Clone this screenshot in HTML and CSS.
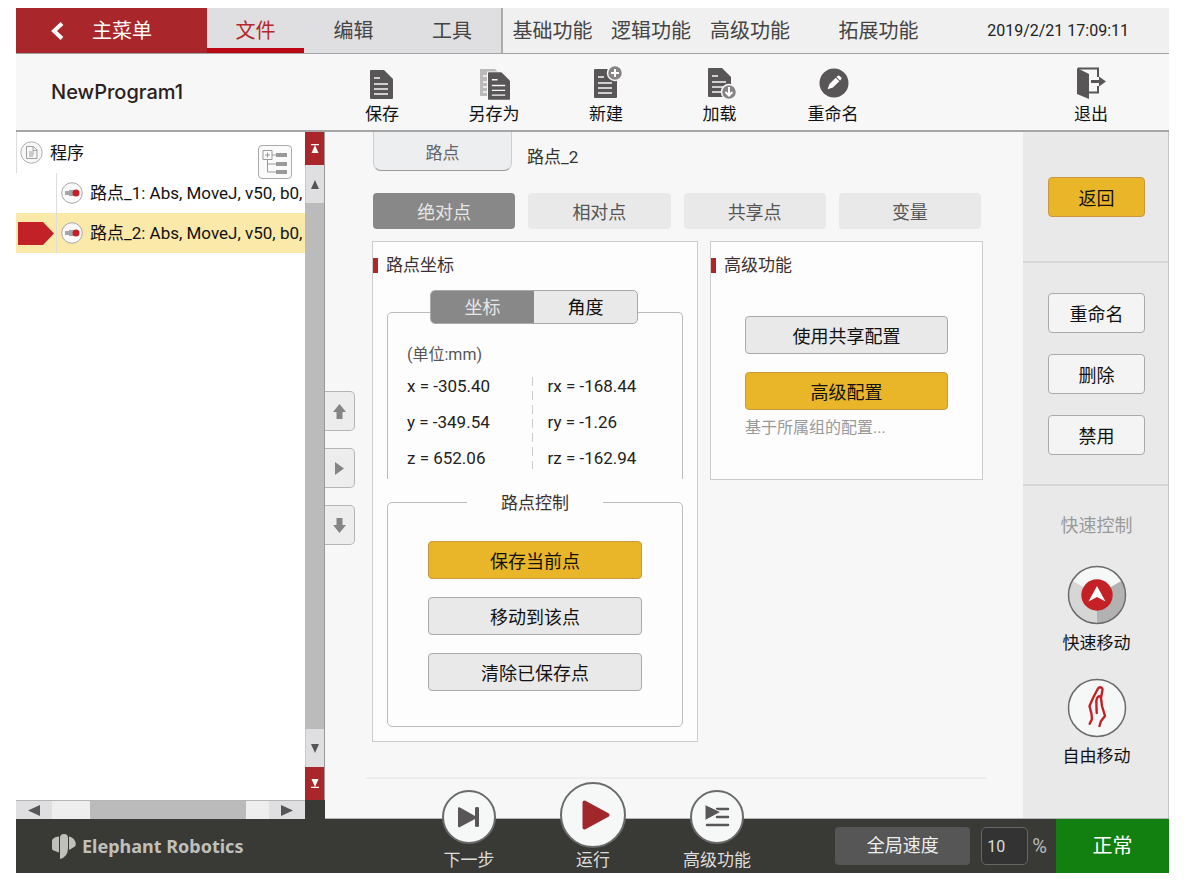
FILE: index.html
```html
<!DOCTYPE html>
<html lang="zh-CN">
<head>
<meta charset="utf-8">
<meta name="viewport" content="width=device-width, initial-scale=1">
<title>NewProgram1</title>
<link rel="stylesheet" href="styles.css">
</head>
<body>
<svg class="defs" width="0" height="0" aria-hidden="true">
  <symbol id="doc" viewBox="0 0 23 29">
    <path fill="#595657" d="M1 0h13l9 9v19a1 1 0 0 1-1 1H1a1 1 0 0 1-1-1V1a1 1 0 0 1 1-1z"/>
    <path stroke="#f7f7f7" stroke-width="1.400" d="M4 8h6M4 14h14M4 19h14M4 24h14"/>
  </symbol>
  <symbol id="point" viewBox="0 0 22 22">
    <circle cx="11" cy="11" r="10.300" fill="#fafafa" stroke="#a9a9a9"/>
    <path fill="#a3a6a8" d="M4 9h4V8h7v6H8v-1H4z"/>
    <circle cx="15" cy="11" r="3.500" fill="#c32127"/>
  </symbol>
</svg>
<div class="app">
  <nav class="menubar">
    <button class="menu-home"><svg width="14" height="18" viewBox="0 0 14 18"><path d="M12 1.500L4 9l8 7.500" fill="none" stroke="#fff" stroke-width="4"/></svg>主菜单</button>
    <button class="menu-item menu-active">文件</button>
    <button class="menu-item">编辑</button>
    <button class="menu-item menu-last">工具</button>
    <button class="menu-item menu-light">基础功能</button>
    <button class="menu-item menu-light">逻辑功能</button>
    <button class="menu-item menu-light">高级功能</button>
    <button class="menu-item menu-light">拓展功能</button>
    <time class="clock">2019/2/21 17:09:11</time>
  </nav>

  <header class="toolbar">
    <h1 class="program-name">NewProgram1</h1>
    <button class="tool"><svg width="34" height="34" viewBox="0 0 34 34"><use href="#doc" x="5" y="4" width="23" height="29"/></svg>保存</button>
    <button class="tool"><svg width="34" height="34" viewBox="0 0 34 34"><path fill="#b9b9b9" d="M3 3h15l6 6v21H3z"/><path stroke="#f7f7f7" stroke-width="1.500" d="M6 10h6M6 16h6M6 21h6M6 26h6"/><path d="M10 5.500h14l9 9V34H10z" fill="#f7f7f7"/><use href="#doc" x="11" y="6" width="22" height="28"/></svg>另存为</button>
    <button class="tool"><svg width="34" height="34" viewBox="0 0 34 34"><use href="#doc" x="5" y="3" width="23" height="29"/><circle cx="26" cy="7" r="7.500" fill="#858384" stroke="#f7f7f7" stroke-width="1.500"/><path d="M26 3v8M22 7h8" stroke="#fff" stroke-width="2"/></svg>新建</button>
    <button class="tool"><svg width="34" height="34" viewBox="0 0 34 34"><use href="#doc" x="5" y="2" width="23" height="29"/><circle cx="26" cy="26" r="7.500" fill="#858384" stroke="#f7f7f7" stroke-width="1.500"/><path d="M26 21v8M22.500 26l3.500 3.500 3.500-3.500" fill="none" stroke="#fff" stroke-width="2"/></svg>加载</button>
    <button class="tool"><svg width="34" height="34" viewBox="0 0 34 34"><circle cx="18" cy="17" r="14.500" fill="#595657"/><g transform="rotate(45 18 17)"><path fill="#fff" d="M15.500 12h5v9l-2.500 5-2.500-5z"/><path fill="#fff" d="M15.500 9.500q0-1.500 1.500-1.500h2q1.500 0 1.500 1.500V11h-5z"/></g></svg>重命名</button>
    <button class="tool tool-exit"><svg width="34" height="34" viewBox="0 0 34 34"><path fill="#595657" d="M3 2l12 6v25L3 28z"/><path d="M4 2.500h20V11M24 20v6.500h-9" fill="none" stroke="#595657" stroke-width="2"/><path fill="#595657" d="M17 14h8v-3.500l7 5-7 5V17h-8z"/></svg>退出</button>
  </header>

  <main class="workspace">
    <section class="tree-pane">
      <div class="tree-view">
        <ul class="tree">
          <li class="tree-root"><svg width="23" height="23" viewBox="0 0 23 23"><circle cx="11.500" cy="11.500" r="10.700" fill="#f7f7f7" stroke="#b0b0b0"/><path d="M6.500 5.500h7l3.500 3.500v8.500H6.500zM13 5.500v4h4M9 11h5M9 13h5M9 15h4" fill="none" stroke="#a0a0a0"/></svg>程序</li>
          <li class="tree-row"><span class="marker"></span><span class="tree-leaf"><svg width="22" height="22"><use href="#point"/></svg>路点_1: Abs, MoveJ, v50, b0,</span></li>
          <li class="tree-row tree-selected"><span class="marker"><svg width="36" height="23" viewBox="0 0 36 23"><path fill="#c22128" d="M0 0h25l11 11.500L25 23H0z"/></svg></span><span class="tree-leaf"><svg width="22" height="22"><use href="#point"/></svg>路点_2: Abs, MoveJ, v50, b0,</span></li>
        </ul>
        <button class="tree-toggle" aria-label="展开"><svg width="26" height="26" viewBox="0 0 26 26"><path d="M1 1.500h9v9H1zM5.500 3.500v5M3 6h5M10 6h4M5.500 11v12H15M5.500 15H15" fill="none" stroke="#999"/><path fill="#999" d="M14 4h11v4H14zM14 13h11v4H14zM14 21h11v4H14z"/></svg></button>
      </div>
      <div class="vscroll">
        <button class="scroll-end" aria-label="顶部"><svg width="8" height="9" viewBox="0 0 8 9"><path fill="#fff" d="M0 0h8v1.200H0zM4 1l3.500 8h-7z"/></svg></button>
        <button class="scroll-step" aria-label="向上"><svg width="8" height="9" viewBox="0 0 8 9"><path fill="#555" d="M4 0l4 9H0z"/></svg></button>
        <div class="vthumb"></div>
        <button class="scroll-step" aria-label="向下"><svg width="8" height="9" viewBox="0 0 8 9"><path fill="#555" d="M4 9l4-9H0z"/></svg></button>
        <button class="scroll-end" aria-label="底部"><svg width="8" height="9" viewBox="0 0 8 9"><path fill="#fff" d="M0 7.800h8V9H0zM4 8L.5 0h7z"/></svg></button>
      </div>
      <div class="hscroll">
        <button class="hstep" aria-label="向左"><svg width="12" height="11" viewBox="0 0 12 11"><path fill="#555" d="M0 5.500L12 0v11z"/></svg></button>
        <div class="htrack"><div class="hthumb"></div></div>
        <button class="hstep" aria-label="向右"><svg width="12" height="11" viewBox="0 0 12 11"><path fill="#555" d="M12 5.500L0 0v11z"/></svg></button>
      </div>
      <div class="scroll-corner"></div>
    </section>

    <div class="movers">
      <button class="mover" aria-label="上移"><svg width="13" height="15" viewBox="0 0 13 15"><path fill="#858585" d="M6.500 0L13 8H9.500v7h-6V8H0z"/></svg></button>
      <button class="mover" aria-label="右移"><svg width="9" height="13" viewBox="0 0 9 13"><path fill="#858585" d="M0 0l9 6.500L0 13z"/></svg></button>
      <button class="mover" aria-label="下移"><svg width="13" height="15" viewBox="0 0 13 15"><path fill="#858585" d="M6.500 15L0 7h3.500V0h6v7H13z"/></svg></button>
    </div>

    <section class="editor">
      <div class="path-row">
        <div class="path-tab">路点</div>
        <h2 class="path-name">路点_2</h2>
      </div>
      <div class="kind-tabs">
        <button class="kind-tab kind-active">绝对点</button>
        <button class="kind-tab">相对点</button>
        <button class="kind-tab">共享点</button>
        <button class="kind-tab">变量</button>
      </div>
      <div class="panels">
        <section class="panel">
          <h3 class="panel-title">路点坐标</h3>
          <div class="coords">
            <div class="switch"><button class="switch-on">坐标</button><button>角度</button></div>
            <p class="unit">(单位:mm)</p>
            <div class="coord-grid">
              <ul class="coord-list"><li>x = -305.40</li><li>y = -349.54</li><li>z = 652.06</li></ul>
              <ul class="coord-list coord-right"><li>rx = -168.44</li><li>ry = -1.26</li><li>rz = -162.94</li></ul>
            </div>
          </div>
          <fieldset class="control-box">
            <legend>路点控制</legend>
            <button class="btn btn-gold">保存当前点</button>
            <button class="btn">移动到该点</button>
            <button class="btn">清除已保存点</button>
          </fieldset>
        </section>
        <section class="panel">
          <h3 class="panel-title">高级功能</h3>
          <div class="advanced">
            <button class="btn">使用共享配置</button>
            <button class="btn btn-gold">高级配置</button>
          </div>
          <p class="hint">基于所属组的配置...</p>
        </section>
      </div>
      <hr class="divider">
    </section>

    <aside class="side">
      <div class="side-group side-back"><button class="btn btn-gold">返回</button></div>
      <div class="side-group side-edit">
        <button class="btn btn-pale">重命名</button>
        <button class="btn btn-pale">删除</button>
        <button class="btn btn-pale">禁用</button>
      </div>
      <div class="side-group side-quick">
        <h3 class="quick-title">快速控制</h3>
        <button class="quick"><svg width="60" height="60" viewBox="0 0 60 60"><circle cx="30" cy="30" r="28" fill="#f6f8f8"/><path fill="#b2b2b2" d="M30 30l24.200-14A28 28 0 0 1 30 58z"/><path fill="#d6d6d6" d="M30 30v28A28 28 0 0 1 5.800 16z"/><circle cx="30" cy="30" r="28.500" fill="none" stroke="#6a6a6a" stroke-width="1.500"/><circle cx="30" cy="30" r="15.700" fill="#c42127"/><path fill="#fff" d="M30 21l8.500 15.500-8.500-4.500-8.500 4.500z"/></svg>快速移动</button>
        <button class="quick"><svg width="60" height="60" viewBox="0 0 60 60"><circle cx="30" cy="30" r="28.500" fill="#f6f8f8" stroke="#6a6a6a" stroke-width="1.500"/><path d="M22.700 45.700L25 41l-.5-5-2-8 4-9L31 10.500q1.500-2 4-.5 1 1 .3 3L34 20l1 8 3 10-4 5-1.500 5M29.700 35l-.4-12q.5-3.500 2-4.500t2.700 1.500" fill="none" stroke="#c42127" stroke-width="2.400" stroke-linecap="round" stroke-linejoin="round"/></svg>自由移动</button>
      </div>
    </aside>
  </main>

  <footer class="statusbar">
    <div class="brand"><svg width="24" height="25" viewBox="0 0 24 25"><path fill="#c0c0bb" d="M7 2.500v16L1.500 16.500Q0 16 0 14.500V7q0-1.500 1-2.200Q3.500 2.500 7 2.500zM8 4q0-4 4-4t4 4v10q0 9-8 11zM17 2.500q4 .5 6 4.500 1.500 3 0 5.500L17 16z"/></svg>Elephant Robotics</div>
    <div class="run-controls">
      <button class="run"><svg width="54" height="54" viewBox="0 0 54 54"><circle cx="27" cy="27" r="26" fill="#f6f8f8" stroke="#6a6a6a" stroke-width="2"/><path fill="#595657" d="M16 18.500q0-2 2-1L33 26v-8q0-1 2-1t2 1v18q0 1-2 1t-2-1v-7l-15 8q-2 1-2-1z"/></svg>下一步</button>
      <button class="run run-main"><svg width="66" height="66" viewBox="0 0 66 66"><circle cx="33" cy="33" r="32" fill="#f6f8f8" stroke="#6a6a6a" stroke-width="2"/><path fill="#a0272a" stroke="#a0272a" stroke-width="4" stroke-linejoin="round" d="M24.500 20.500l23 12.500-23 12.500z"/></svg>运行</button>
      <button class="run"><svg width="54" height="54" viewBox="0 0 54 54"><circle cx="27" cy="27" r="26" fill="#f6f8f8" stroke="#6a6a6a" stroke-width="2"/><path d="M27 19h11M27 27h11M17 35h21" stroke="#595657" stroke-width="2.500" stroke-linecap="round"/><path fill="#595657" stroke="#f6f8f8" d="M15 14.500L31 22 15 30.500z"/></svg>高级功能</button>
    </div>
    <div class="speed">
      <label class="speed-label" for="speed">全局速度</label>
      <input class="speed-input" id="speed" type="text" value="10">
      <span class="percent">%</span>
    </div>
    <div class="state">正常</div>
  </footer>
</div>
</body>
</html>
```

FILE: styles.css
```css
* { box-sizing: border-box; }
body {
  margin: 0;
  padding: 8px 25px 17px 16px;
  background: #fff;
  color: #222;
  font: 17px/24px Roboto, "Noto Sans CJK SC", sans-serif;
}
h1, h2, h3, p, ul { margin: 0; padding: 0; font-weight: 400; }
ul { list-style: none; }
button, input { font: inherit; color: inherit; margin: 0; padding: 0; border: 0; background: none; }
svg { display: block; flex: none; }
.defs { position: absolute; }
.app { display: flex; flex-direction: column; min-height: calc(100vh - 25px); }

.menubar {
  display: grid;
  grid-template-columns: 191fr 97fr 99fr 100fr 99fr 98fr 100fr 157fr 212fr;
  height: 46px;
  border-bottom: 1px solid #a3a3a3;
  background: #f0f0f0;
  font-size: 20px;
  color: #444;
}
.menu-home { display: flex; align-items: center; gap: 28px; padding-left: 34px; background: #a9272a; color: #fff; }
.menu-item { background: #dfdfe1; }
.menu-active { color: #b5272b; border-bottom: 5px solid #b90714; padding-top: 5px; }
.menu-last { border-right: 2px solid #acacac; }
.menu-light { background: none; }
.clock { align-self: center; justify-self: end; padding-right: 40px; font-size: 16px; color: #222; }

.toolbar {
  display: grid;
  grid-template-columns: 310fr 112fr 112fr 112fr 115fr 112fr 124fr 156fr;
  height: 78px;
  border-bottom: 2px solid #a6a6a6;
  background: #f7f7f7;
}
.program-name { align-self: center; padding-left: 35px; font-family: Inter, sans-serif; font-size: 20px; font-weight: 500; color: #2a2020; }
.tool { display: flex; flex-direction: column; align-items: center; padding-top: 12px; gap: 2px; color: #111; }
.tool-exit { grid-column: 8; }

.workspace { display: grid; grid-template-columns: 309px 30px 1fr 146px; flex: 1; background: #f7f7f7; border-bottom: 1px solid #b5b5b5; }
.tree-pane { display: grid; grid-template-columns: 1fr 20px; grid-template-rows: 1fr 19px; margin-bottom: -1px; background: #fff; }
.tree-view { position: relative; overflow: hidden; }
.tree { color: #111; white-space: nowrap; }
.tree-root { display: flex; align-items: center; gap: 7px; height: 41px; padding-left: 3px; border-left: 1px solid #ddd; }
.tree-row { display: flex; height: 40px; }
.tree-selected { background: #fbe9a9; }
.marker { display: flex; align-items: center; width: 41px; padding-left: 2px; border-right: 1px solid #ddd; }
.tree-leaf { display: flex; align-items: center; gap: 7px; padding-left: 4px; }
.tree-toggle {
  position: absolute; top: 13px; right: 13px;
  display: grid; place-items: center; width: 34px; height: 34px;
  border: 1px solid #aaa; border-radius: 4px; background: #fafafa;
}
.vscroll { display: flex; flex-direction: column; border-right: 1px solid #999; background: #dfdfe1; }
.vscroll button { display: grid; place-items: center; }
.scroll-end { height: 33px; background: #a9272a; }
.scroll-step { height: 38px; border-left: 1px solid #c8c8c8; }
.vthumb { flex: 1; background: #bbb; }
.hscroll { display: grid; grid-template-columns: 36px 1fr 36px; border-top: 1px solid #b5b5b5; background: #dfdfe1; }
.hstep { display: grid; place-items: center; }
.htrack { padding-left: 38px; padding-right: 23px; background: #eee; }
.hthumb { height: 100%; background: #bbb; }
.scroll-corner { background: #393936; }

.movers { display: flex; flex-direction: column; gap: 17px; padding-top: 259px; }
.mover { display: grid; place-items: center; height: 40px; border: 1px solid #b5b5b5; border-left: 0; border-radius: 0 5px 5px 0; background: #ededed; }

.editor { display: flex; flex-direction: column; padding: 0 36px 39px 11px; }
.path-row { display: flex; gap: 15px; padding-left: 7px; }
.path-tab { width: 139px; height: 39px; padding-top: 9px; text-align: center; color: #666; background: #edeef0; border: 1px solid #ccc; border-top: 0; border-bottom-color: #999; border-radius: 0 0 8px 8px; }
.path-name { padding-top: 13px; font-size: 17px; color: #333; }
.kind-tabs { display: grid; grid-template-columns: repeat(4, 1fr); gap: 13px; padding: 22px 6px 12px 7px; font-size: 18px; color: #555; }
.kind-tab { height: 36px; padding-top: 3px; border-radius: 4px; background: #e9e9e9; }
.kind-active { background: #888; color: #e6e6e6; }
.panels { display: grid; grid-template-columns: 326fr 273fr; gap: 12px; align-items: start; padding: 0 4px 0 6px; }
.panel { border: 1px solid #ccc; background: #fdfdfd; padding: 11px 14px 14px; }
.panel-title { display: flex; align-items: center; gap: 8px; margin-left: -14px; font-size: 17px; color: #3c3232; }
.panel-title::before { content: ""; width: 5px; height: 15px; background: #b0242a; }
.coords { margin-top: 35px; padding: 0 19px 3px; border: 1px solid #bbb; border-bottom: 0; border-radius: 5px 5px 0 0; }
.switch { display: flex; height: 34px; margin: -23px 25px 0 23px; border: 1px solid #aaa; border-radius: 5px; overflow: hidden; background: #e9e9e9; font-size: 18px; color: #111; }
.switch button { flex: 1; padding-top: 2px; }
.switch .switch-on { background: #888; color: #e6e6e6; }
.unit { margin-top: 19px; font-size: 16px; color: #555; }
.coord-grid { display: grid; grid-template-columns: 125fr 132fr; margin-top: 1px; }
.coord-list { line-height: 36px; }
.coord-right { padding-left: 16px; background: repeating-linear-gradient(#ccc 0 9px, transparent 9px 14px) 0 9px / 1px 92px no-repeat; }
.control-box { display: flex; flex-direction: column; gap: 18px; min-width: 0; margin: 11px 0 0; padding: 27px 40px 35px; border: 1px solid #bbb; border-radius: 5px; }
.control-box legend { width: 136px; margin: 0 auto; padding: 2px 0 0; text-align: center; font-size: 17px; line-height: 22px; color: #3c3232; }
.btn { height: 38px; padding-top: 3px; border: 1px solid #aaa; border-radius: 4px; background: #e9e9e9; font-size: 18px; color: #111; }
.btn-gold { background: #e9b629; border-color: #c9983f; }
.btn-pale { background: #f4f4f4; }
.advanced { display: flex; flex-direction: column; gap: 18px; padding: 39px 20px 0; }
.hint { padding: 6px 20px 25px; font-size: 16px; color: #999; }
.divider { width: 100%; height: 2px; margin: auto 0 0; border: 0; background: #ededed; }

.side { display: flex; flex-direction: column; border-right: 1px solid #c4c4c4; background: #e9e9e9; }
.side-group { display: flex; flex-direction: column; padding: 0 23px 0 25px; }
.side-group + .side-group { border-top: 2px solid #d6d6d6; }
.side .btn { height: 40px; }
.side-back { padding-top: 45px; padding-bottom: 44px; }
.side-edit { gap: 21px; padding-top: 30px; padding-bottom: 29px; }
.side-group.side-quick { align-items: center; padding: 28px 0 0 2px; }
.quick-title { font-size: 18px; color: #999; }
.quick { display: flex; flex-direction: column; align-items: center; gap: 6px; margin-top: 27px; color: #111; }
.quick + .quick { margin-top: 23px; }

.statusbar { display: grid; grid-template-columns: 391fr 372fr 277fr 113fr; height: 54px; background: #393936; color: #ddd; }
.brand { display: flex; align-items: center; gap: 6px; padding-left: 36px; font-family: "Noto Sans", sans-serif; font-size: 18px; font-weight: 700; color: #c0c0bb; }
.run-controls { display: grid; grid-template-columns: repeat(3, 1fr); align-items: end; margin-top: -37px; }
.run { display: flex; flex-direction: column; align-items: center; gap: 4px; line-height: 25px; }
.run-main { gap: 0; }
.speed { display: flex; align-items: center; justify-content: flex-end; font-size: 18px; }
.speed-label { width: 135px; margin-right: 11px; border-radius: 4px; background: #565656; line-height: 38px; text-align: center; color: #eee; }
.speed-input { width: 47px; height: 38px; padding-left: 5px; border: 1px solid #666; border-radius: 5px; background: #333; font-size: 16px; color: #ddd; }
.percent { margin: 0 9px 0 4px; font-size: 20px; color: #bbb; }
.state { display: grid; place-items: center; background: #118011; font-size: 20px; color: #fff; }
```
